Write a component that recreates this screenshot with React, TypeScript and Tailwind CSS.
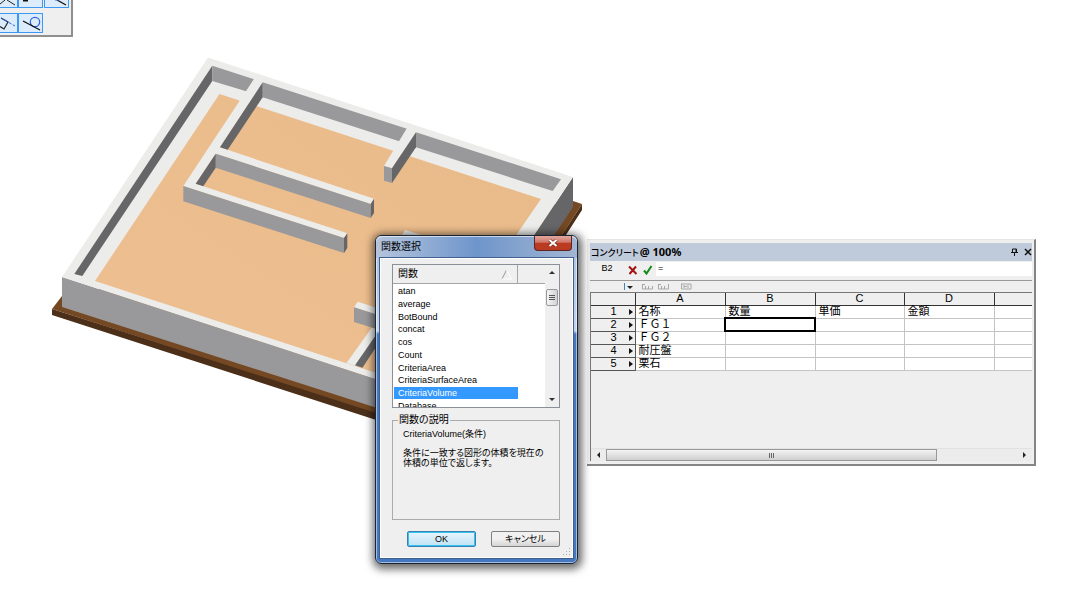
import React, { useState } from "react"

const FUNCTIONS = [
  "atan",
  "average",
  "BotBound",
  "concat",
  "cos",
  "Count",
  "CriteriaArea",
  "CriteriaSurfaceArea",
  "CriteriaVolume",
  "Database"
]

const COLUMNS = ["A", "B", "C", "D", ""]

const ROWS = [
  ["名称", "数量", "単価", "金額", ""],
  ["ＦＧ１", "", "", "", ""],
  ["ＦＧ２", "", "", "", ""],
  ["耐圧盤", "", "", "", ""],
  ["栗石", "", "", "", ""]
]

const TOP = "#ececea"
const FACE = "#99999b"
const DARK = "#666668"

const FoundationModel: React.FC = () => (
  <svg
    className="absolute left-0 top-0"
    width="600"
    height="450"
    viewBox="0 0 600 450"
    role="img"
    aria-label="3D"
  >
    <defs>
      <linearGradient id="floor" x1="0" y1="1" x2="1" y2="0">
        <stop offset="0" stopColor="#eec092" />
        <stop offset="1" stopColor="#e9ba88" />
      </linearGradient>
    </defs>
    {/* Rubble base */}
    <polygon points="52,309 435,430 582,204 582,210 435,439 52,315" fill="#4b2f19" />
    <polygon points="52,309 62,296 573,201 582,204 435,432" fill="#744823" />
    {/* Outer walls */}
    <polygon points="62,277 427,396 427,424 62,307" fill={FACE} />
    <polygon points="573,177 573,207 427,427 427,396" fill={DARK} />
    <polygon points="208,57.5 573,177 427,396 62,277" fill={TOP} />
    <polygon points="219.5,94 541,199 413,385 95,281" fill="url(#floor)" />
    {/* Inner faces along the perimeter */}
    <polygon points="212.3,65.7 212.3,81 82.3,276 74.3,274" fill={DARK} />
    <polygon points="212.3,65.7 254,79.3 247,91.5 212.3,81" fill={FACE} />
    <polygon points="262.7,82.3 407.7,129 400,141.5 262.7,97.3" fill={FACE} />
    <polygon points="416,132.3 561,179.3 552.7,191 416,147.3" fill={FACE} />
    {/* U shaped partition */}
    <polygon
      points="254,79 183.3,186 344,238 347.3,233.3 195.7,183.7 215.7,153.7 370.7,204 374,198.7 220,147.3 263,82"
      fill={TOP}
    />
    <polygon points="262.7,82.3 262.7,97.3 227.7,149.8 220,147.3" fill={DARK} />
    <polygon points="215.7,153.7 370.7,204 370.7,218 215.7,167.7" fill={FACE} />
    <polygon points="374,198.7 374,213 370.7,218 370.7,204" fill={DARK} />
    <polygon points="215.7,153.7 215.7,167.7 203.3,186.2 195.7,183.7" fill={DARK} />
    <polygon points="183.3,186 344,238 344,253 183.3,201.3" fill={FACE} />
    <polygon points="347.3,233.3 347.3,248 344,253 344,238" fill={DARK} />
    {/* Short partition on the back wall */}
    <polygon points="407,128 384,166 392,168.3 416.3,132" fill={TOP} />
    <polygon points="384,166 392,168.3 392,183 384,180.7" fill={FACE} />
    <polygon points="416,132.3 416,147.3 392,183 392,168.3" fill={DARK} />
    {/* Pieces that run under the dialog */}
    <polygon points="405,230 425,236 400,238" fill={TOP} />
    <polygon points="378,319 346.5,363 356,366 390,315" fill={TOP} />
    <polygon points="378,332 355,365.3 362.5,367.7 378,344" fill={DARK} />
    <polygon points="357.7,301.7 378,308.3 378,315 354,307.3" fill={TOP} />
    <polygon points="354,307.3 378,315 378,329.5 354,322" fill={FACE} />
  </svg>
)

const SnapPalette: React.FC = () => (
  <div className="absolute left-0 top-0 h-[37px] w-[73px] overflow-hidden border-r-2 border-b-2 border-[#8f8f8f] bg-[#efefef]">
    <div className="flex h-2">
      <button aria-label="snap to grid" className="w-[18px] border-r border-b border-[#3c98f0] bg-[#dcecfb]">
        <svg width="17" height="7" className="block">
          <path d="M0 4 5 0M7 0 15 5" stroke="#222" fill="none" />
        </svg>
      </button>
      <button aria-label="snap to object" className="mr-px w-[25px] border-r border-b border-l border-[#3c98f0] bg-[#dcecfb]">
        <svg width="23" height="7" className="block">
          <path d="M4 .5h5" stroke="#111" strokeWidth="2" />
        </svg>
      </button>
      <button aria-label="snap to angle" className="w-[25px] border-r border-b border-l border-[#3c98f0] bg-[#dcecfb]">
        <svg width="23" height="7" className="block">
          <path d="M12 0 21 5" stroke="#111" strokeWidth="1.3" />
          <path d="M10 0h4" stroke="#2d63e8" />
        </svg>
      </button>
    </div>
    <div className="mt-[5px] flex h-5">
      <button aria-label="snap to edge" className="w-[18px] border-y border-r border-[#3c98f0] bg-[#dcecfb]">
        <svg width="17" height="18" className="block">
          <path d="M1 4 8 8 4 15 0 12.500" stroke="#222" fill="none" strokeWidth="1.2" />
          <path d="M1 4 15 12" stroke="#2d63e8" strokeDasharray="3 1.5" fill="none" />
        </svg>
      </button>
      <button aria-label="snap to tangent" className="w-[25px] border border-[#3c98f0] bg-[#dcecfb]">
        <svg width="23" height="18" className="block">
          <circle cx="16" cy="8" r="4.7" stroke="#2d63e8" fill="none" strokeWidth="1.2" />
          <path d="M4 7 21 16" stroke="#111" strokeWidth="1.3" />
        </svg>
      </button>
    </div>
  </div>
)

interface FunctionDialogProps {
  onClose: () => void
}

const FunctionDialog: React.FC<FunctionDialogProps> = ({ onClose }) => {
  const [selected, setSelected] = useState("CriteriaVolume")

  return (
    <section
      role="dialog"
      aria-labelledby="dialog-title"
      className="absolute left-[375px] top-[235px] flex h-[329px] w-[203px] flex-col rounded-md border border-[#1b2433] bg-linear-to-b from-[#a9c0df] from-0% via-[#c5d5ea] via-29% to-[#4678c2] to-30% px-1 pb-[5px] text-[10px] leading-[12px] shadow-[1px_2px_9px_3px_rgba(0,0,0,0.6),inset_0_0_0_1px_rgba(255,255,255,0.5)]"
    >
      <header className="-mx-1 flex h-[22px] items-start justify-between rounded-t-md bg-linear-to-r from-[#b5c4dc] from-0% via-[#6e95cb] via-50% to-[#a3b6d2] to-100% pr-[5px] pl-[5px] shadow-[inset_0_1px_0_rgba(255,255,255,0.6)]">
        <h2 id="dialog-title" className="pt-[5px]">関数選択</h2>
        <button
          aria-label="閉じる"
          onClick={onClose}
          className="flex h-[15px] w-[38px] items-center justify-center rounded-b-sm border border-t-0 border-[#5d2525] bg-linear-to-b from-[#e0a89f] from-0% via-[#cf7566] via-45% to-[#bb3a22] to-50%"
        >
          <svg width="10" height="8" viewBox="0 0 10 8">
            <path d="M1.5 1 8.5 7M8.5 1 1.5 7" stroke="#6d2b24" strokeWidth="3.2" />
            <path d="M1.5 1 8.5 7M8.5 1 1.5 7" stroke="#fff" strokeWidth="2" />
          </svg>
        </button>
      </header>

      <div className="relative flex flex-1 flex-col border border-white bg-[#efefef] pt-[5px] pr-3 pl-[11px] outline-1 outline-[#3f5f8f]">
        <div className="flex h-[144px] border border-[#8a8f98] bg-white">
          <div className="flex min-w-0 flex-1 flex-col overflow-hidden">
            <div className="flex h-[19px] shrink-0 items-center border-b border-[#a5a5a5] bg-[#efefef] pl-[5px]">
              <span className="flex-1">関数</span>
              <svg width="12" height="11" viewBox="0 0 12 11" className="mr-1">
                <path d="M1 10 5.5 1" stroke="#999" fill="none" />
                <path d="M5.5 1 10.5 10H1" stroke="#fff" fill="none" />
              </svg>
              <span className="mr-[27px] h-full w-px bg-[#a5a5a5]" />
            </div>
            <ul
              role="listbox"
              aria-label="関数"
              className="flex h-[128px] shrink-0 flex-col pr-[27px] pl-px pt-px text-[9px]"
            >
              {FUNCTIONS.map((name) => (
                <li
                  key={name}
                  role="option"
                  aria-selected={name === selected}
                  onClick={() => setSelected(name)}
                  className={
                    name === selected
                      ? "flex flex-1 items-center bg-[#3399ff] pl-1 text-white"
                      : "flex flex-1 items-center pl-1"
                  }
                >
                  {name}
                </li>
              ))}
            </ul>
          </div>
          <div className="flex w-[14px] flex-col items-center bg-[#efefef]">
            <svg width="14" height="24" viewBox="0 0 14 24">
              <path d="M4 9h6L7 6z" fill="#333" />
            </svg>
            <div className="flex h-[17px] w-3 flex-col items-center justify-center gap-px rounded-xs border border-[#999] bg-linear-to-r from-[#f5f5f5] to-[#d2d2d2]">
              <span className="h-px w-[6px] bg-[#555]" />
              <span className="h-px w-[6px] bg-[#555]" />
              <span className="h-px w-[6px] bg-[#555]" />
            </div>
            <svg width="14" height="14" viewBox="0 0 14 14" className="mt-auto">
              <path d="M4 5h6L7 8z" fill="#333" />
            </svg>
          </div>
        </div>

        <fieldset className="mt-[6px] h-[106px] border border-[#a9acae] pl-[10px] [font-feature-settings:'palt']">
          <legend className="-ml-[5px] px-px">関数の説明</legend>
          <p className="mt-[2px] text-[9px]">{selected}(条件)</p>
          <p className="mt-2 text-[9px] leading-[10px]">
            条件に一致する図形の体積を現在の
            <br />
            体積の単位で返します。
          </p>
        </fieldset>

        <div className="mt-[11px] flex justify-end gap-[15px] text-[9px] [font-feature-settings:'palt']">
          <button
            onClick={onClose}
            className="h-4 w-[69px] rounded-xs border border-[#3c7fb1] bg-linear-to-b from-[#e9f5fc] to-[#bfe3f5] shadow-[inset_0_0_0_1px_#33c3ee]"
          >
            OK
          </button>
          <button
            onClick={onClose}
            className="h-4 w-[69px] rounded-xs border border-[#808080] bg-linear-to-b from-[#f1f1f1] from-50% to-[#d4d4d4]"
          >
            キャンセル
          </button>
        </div>
        <svg width="8" height="8" viewBox="0 0 8 8" className="absolute right-px bottom-px">
          <path d="M6 0h1v1H6zM3 3h1v1H3zM6 3h1v1H6zM0 6h1v1H0zM3 6h1v1H3zM6 6h1v1H6z" fill="#b0b0b0" />
        </svg>
      </div>
    </section>
  )
}

const WorksheetPanel: React.FC = () => {
  const [formula, setFormula] = useState("=")

  return (
    <section className="absolute top-[239px] right-[42px] left-[587px] flex h-[227px] flex-col border-t border-r-2 border-b-2 border-[#858585] border-t-[#e4e4e4] bg-[#efefef] pt-[3px] pr-[2px] pb-[3px] pl-[3px] text-[11px] leading-[12px]">
      <header className="flex h-[18px] items-center justify-between bg-[#bfcbda] pl-px">
        <h2 className="flex items-baseline gap-px">
          <span className="text-[9px] font-medium [font-feature-settings:'palt']">コンクリート</span>
          <span className="font-['Noto_Sans'] font-bold">@ 100%</span>
        </h2>
        <div className="flex items-center gap-[6px]">
          <button aria-label="固定">
            <svg width="7" height="8" viewBox="0 0 7 8" className="block">
              <path d="M1.5 4.5V1h4v3.5M0 4.5h7M3.5 5v3" stroke="#111" fill="none" />
              <path d="M5 1v4" stroke="#111" />
            </svg>
          </button>
          <button aria-label="パネルを閉じる">
            <svg width="8" height="8" viewBox="0 0 8 8" className="block">
              <path d="M1 1 7 7M7 1 1 7" stroke="#111" strokeWidth="1.5" />
            </svg>
          </button>
        </div>
      </header>

      <div className="flex h-[20px] items-start border-b border-[#999] pt-px">
        <label htmlFor="formula" className="w-[34px] pt-px text-center text-[9px] leading-[10px]">
          B2
        </label>
        <button aria-label="取消" className="mt-[3px] ml-1">
          <svg width="10" height="10" viewBox="0 0 10 10" className="block">
            <path d="M1 1.5 8.5 9M8 1.5 1.5 9" stroke="#a31212" strokeWidth="2" />
          </svg>
        </button>
        <button aria-label="確定" className="mt-[3px] ml-[5px]">
          <svg width="10" height="10" viewBox="0 0 10 10" className="block">
            <path d="M1 5.5 3.5 8.5 8.5 1" stroke="#118a18" strokeWidth="2" fill="none" />
          </svg>
        </button>
        <input
          id="formula"
          value={formula}
          onChange={(e) => setFormula(e.target.value)}
          className="ml-[3px] h-[14px] min-w-0 flex-1 bg-white px-[2px] pb-[3px] text-[9px] leading-[10px] outline-none"
        />
      </div>

      <div className="flex h-[11px] items-center pl-[34px]">
        <svg width="68" height="10" viewBox="0 0 68 10">
          <path d="M.5 1v7" stroke="#3a86c8" />
          <path d="M3 4h6L6 7z" fill="#222" />
          <path d="M18.5 2v5h10V4M21.5 4v3M24.500 4v3M18 2.500h3M34.500 2v5h10V2M37.500 4v3M40.500 4v3M34 2.500h3" stroke="#a8a8a8" fill="none" />
          <path d="M57.500 2v5h9.500V2H57M60 3v3M60 4.500h3M64 3v3" stroke="#a8a8a8" fill="none" />
        </svg>
      </div>

      <div className="flex min-h-0 flex-1 flex-col border-t border-l border-[#777]">
        <table className="w-full table-fixed border-collapse">
          <colgroup>
            <col className="w-[44px]" />
            <col className="w-[90px]" />
            <col className="w-[90px]" />
            <col className="w-[89px]" />
            <col className="w-[90px]" />
            <col />
          </colgroup>
          <thead>
            <tr className="h-[12px] leading-[11px]">
              <th className="border-r border-b border-[#333] p-0" />
              {COLUMNS.map((column, i) => (
                <th
                  key={i}
                  scope="col"
                  className={
                    i === 4
                      ? "border-b border-[#333] p-0"
                      : "border-r border-b border-[#333] p-0 font-normal"
                  }
                >
                  {column}
                </th>
              ))}
            </tr>
          </thead>
          <tbody className="leading-[11px]">
            {ROWS.map((row, r) => (
              <tr key={r} className="h-[13px]">
                <th scope="row" className="border-r border-b border-[#555] p-0 font-normal">
                  <span className="flex items-center justify-end gap-[12px] pr-[2px]">
                    {r + 1}
                    <svg width="4" height="6" viewBox="0 0 4 6">
                      <path d="M0 0v6l4-3z" fill="#111" />
                    </svg>
                  </span>
                </th>
                {row.map((value, c) => (
                  <td
                    key={c}
                    className={
                      r === 1 && c === 1
                        ? "border-r border-b border-[#c4c4c4] bg-white p-0 outline-2 -outline-offset-1 outline-black"
                        : c === 4
                          ? "border-b border-[#c4c4c4] bg-white p-0"
                          : "border-r border-b border-[#c4c4c4] bg-white p-0 pl-[3px]"
                    }
                  >
                    {value}
                  </td>
                ))}
              </tr>
            ))}
          </tbody>
        </table>

        <div className="mt-auto flex h-[13px] items-center border-t border-[#e2e2e2] bg-[#ececec]">
          <svg width="15" height="10" viewBox="0 0 15 10">
            <path d="M9 2v6L6 5z" fill="#222" />
          </svg>
          <div className="flex h-3 w-3/4 items-center justify-center gap-px border border-[#999] bg-linear-to-b from-[#f4f4f4] to-[#cfcfcf]">
            <span className="h-[5px] w-px bg-[#666]" />
            <span className="h-[5px] w-px bg-[#666]" />
            <span className="h-[5px] w-px bg-[#666]" />
          </div>
          <svg width="15" height="10" viewBox="0 0 15 10" className="ml-auto">
            <path d="M6 2v6l3-3z" fill="#222" />
          </svg>
        </div>
      </div>
    </section>
  )
}

const App: React.FC = () => {
  const [dialogOpen, setDialogOpen] = useState(true)

  return (
    <main className="relative min-h-screen w-full overflow-hidden bg-white font-['Liberation_Sans','Noto_Sans_CJK_JP',sans-serif] text-black">
      <FoundationModel />
      <SnapPalette />
      <WorksheetPanel />
      {dialogOpen && <FunctionDialog onClose={() => setDialogOpen(false)} />}
    </main>
  )
}

export default App
